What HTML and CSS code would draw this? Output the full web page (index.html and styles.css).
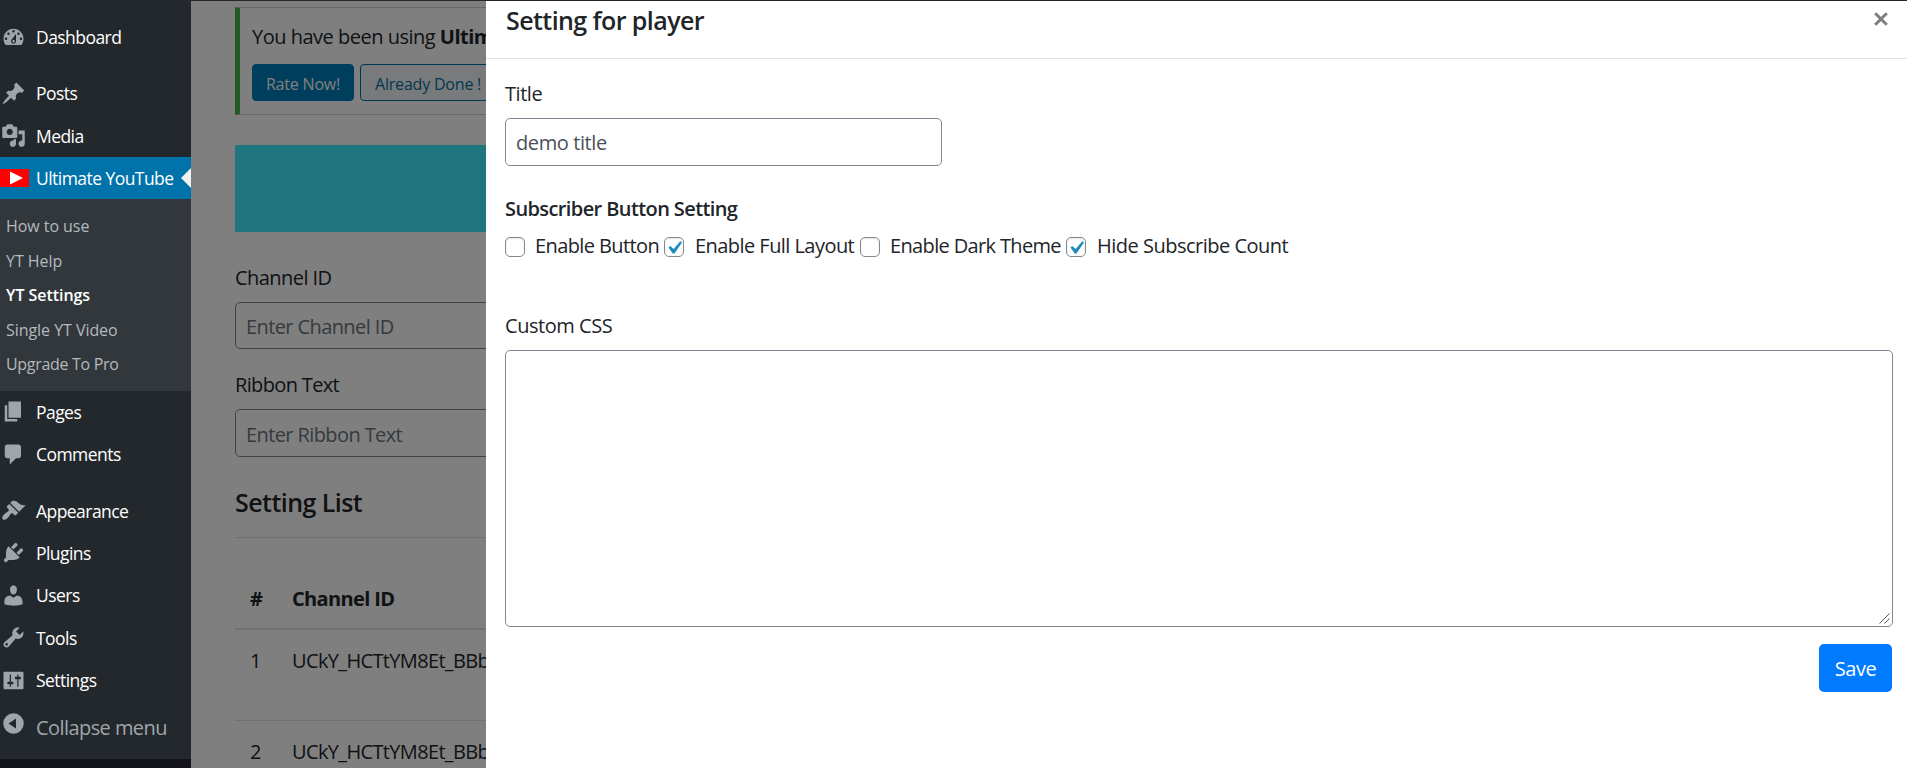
FILE: index.html
```html
<!DOCTYPE html>
<html lang="en">
<head>
<meta charset="utf-8">
<title>Setting for player</title>
<link rel="stylesheet" href="styles.css">
</head>
<body>
<div class="topbar"></div>
<div class="shell">
  <nav class="menu">
    <a class="item"><svg class="icon" viewBox="0 0 20 20"><path d="M3.76 16h12.48c1.1-1.37 1.76-3.11 1.76-5 0-4.42-3.58-8-8-8s-8 3.58-8 8c0 1.89.66 3.63 1.76 5zM10 4c.55 0 1 .45 1 1s-.45 1-1 1-1-.45-1-1 .45-1 1-1zM6 6c.55 0 1 .45 1 1s-.45 1-1 1-1-.45-1-1 .45-1 1-1zm8 0c.55 0 1 .45 1 1s-.45 1-1 1-1-.45-1-1 .45-1 1-1zm-5.37 5.55L12 7v6c0 1.1-.9 2-2 2s-2-.9-2-2c0-.57.24-1.08.63-1.45zM4 10c.55 0 1 .45 1 1s-.45 1-1 1-1-.45-1-1 .45-1 1-1zm12 0c.55 0 1 .45 1 1s-.45 1-1 1-1-.45-1-1 .45-1 1-1zm-5 3c0-.55-.45-1-1-1s-1 .45-1 1 .45 1 1 1 1-.45 1-1z"/></svg><span>Dashboard</span></a>
    <div class="gap"></div>
    <a class="item"><svg class="icon" viewBox="0 0 20 20"><path d="M10.44 3.02l1.82-1.82 6.36 6.35-1.83 1.82c-1.05-.68-2.48-.57-3.41.36l-.75.75c-.92.93-1.04 2.35-.35 3.41l-1.83 1.82-2.41-2.41-2.8 2.79c-.42.42-3.38 2.71-3.8 2.29s1.86-3.39 2.28-3.81l2.79-2.79L4.1 9.36l1.83-1.82c1.05.69 2.48.57 3.4-.36l.75-.75c.93-.92 1.05-2.35.36-3.41z"/></svg><span>Posts</span></a>
    <a class="item"><svg class="icon" viewBox="0 0 20 20"><path d="M13 11V4c0-.55-.45-1-1-1h-1.67L9 1H5L3.67 3H2c-.55 0-1 .45-1 1v7c0 .55.45 1 1 1h10c.55 0 1-.45 1-1zM7 4.5c1.38 0 2.5 1.12 2.5 2.5S8.38 9.5 7 9.5 4.5 8.38 4.5 7 5.62 4.5 7 4.5zM14 6h5v10.5c0 1.38-1.12 2.5-2.5 2.5S14 17.88 14 16.5s1.12-2.5 2.5-2.5c.17 0 .34.02.5.05V9h-3V6zm-4 8.05V13h2v3.5c0 1.38-1.12 2.5-2.5 2.5S7 17.88 7 16.5 8.12 14 9.5 14c.17 0 .34.02.5.05z"/></svg><span>Media</span></a>
    <a class="item current"><svg class="logo" viewBox="0 0 29 18"><rect width="29" height="18" fill="#f00"/><path d="M10 2.5v13L23 9z" fill="#fff"/></svg><span>Ultimate YouTube</span></a>
    <div class="submenu">
      <a><span>How to use</span></a>
      <a><span>YT Help</span></a>
      <a class="active"><span>YT Settings</span></a>
      <a><span>Single YT Video</span></a>
      <a class="tight"><span>Upgrade To Pro</span></a>
    </div>
    <a class="item"><svg class="icon" viewBox="0 0 20 20"><path d="M6 15V2h10v13H6zm-1 1h8v2H3V5h2v11z"/></svg><span>Pages</span></a>
    <a class="item"><svg class="icon" viewBox="0 0 20 20"><path d="M5 2h9c1.1 0 2 .9 2 2v7c0 1.1-.9 2-2 2h-2l-5 5v-5H5c-1.1 0-2-.9-2-2V4c0-1.1.9-2 2-2z"/></svg><span>Comments</span></a>
    <div class="gap"></div>
    <a class="item"><svg class="icon" viewBox="0 0 20 20"><path d="M14.48 11.06L7.41 3.99l1.5-1.5c.5-.56 2.3-.47 3.51.32 1.21.8 1.43 1.28 2.91 2.1 1.18.64 2.45 1.26 4.45.85zm-.71.71L6.7 4.7 4.93 6.47c-.39.39-.39 1.02 0 1.41l1.06 1.06c.39.39.39 1.03 0 1.42-.6.6-1.43 1.11-2.21 1.69-.35.26-.7.53-1.01.84C1.43 14.23.4 16.08 1.4 17.07c.99 1 2.84-.03 4.18-1.36.31-.31.58-.66.85-1.02.57-.78 1.08-1.61 1.69-2.21.39-.39 1.02-.39 1.41 0l1.06 1.06c.39.39 1.02.39 1.41 0z"/></svg><span>Appearance</span></a>
    <a class="item"><svg class="icon" viewBox="0 0 20 20"><path d="M13.11 4.36L9.87 7.6 8 5.73l3.24-3.24c.35-.34 1.05-.2 1.56.32.52.51.66 1.21.31 1.55zm-8 1.77l.91-1.12 9.01 9.01-1.19.84c-.71.71-2.63 1.16-3.82 1.16H6.14L4.9 17.26c-.59.59-1.54.59-2.12 0-.59-.58-.59-1.53 0-2.12l1.24-1.24v-3.88c0-1.13.4-3.19 1.09-3.89zm7.26 3.97l3.24-3.24c.34-.35 1.04-.21 1.55.31.52.51.66 1.21.31 1.55l-3.24 3.25z"/></svg><span>Plugins</span></a>
    <a class="item"><svg class="icon" viewBox="0 0 20 20"><path d="M10 9.25c-2.27 0-2.73-3.44-2.73-3.44C7 4.02 7.82 2 9.97 2c2.16 0 2.98 2.02 2.71 3.81 0 0-.41 3.44-2.68 3.44zm0 2.57L12.72 10c2.39 0 4.52 2.33 4.52 4.53v2.49s-3.65 1.13-7.24 1.13c-3.65 0-7.24-1.13-7.24-1.13v-2.49c0-2.25 1.94-4.48 4.47-4.48z"/></svg><span>Users</span></a>
    <a class="item"><svg class="icon" viewBox="0 0 20 20"><path d="M16.68 9.77c-1.34 1.34-3.3 1.67-4.95.99l-5.41 6.52c-.99.99-2.59.99-3.58 0s-.99-2.59 0-3.57l6.52-5.42c-.68-1.65-.35-3.61.99-4.95 1.28-1.28 3.12-1.62 4.72-1.06l-2.89 2.89 2.82 2.82 2.86-2.87c.53 1.58.18 3.39-1.08 4.65zM3.81 16.21c.4.39 1.04.39 1.43 0 .4-.4.4-1.04 0-1.43-.39-.4-1.03-.4-1.43 0-.39.39-.39 1.03 0 1.43z"/></svg><span>Tools</span></a>
    <a class="item"><svg class="icon" viewBox="0 0 20 20"><path d="M18 16V4c0-.55-.45-1-1-1H3c-.55 0-1 .45-1 1v12c0 .55.45 1 1 1h14c.55 0 1-.45 1-1zM8 11h1c.55 0 1 .45 1 1s-.45 1-1 1H8v1.5c0 .28-.22.5-.5.5s-.5-.22-.5-.5V13H6c-.55 0-1-.45-1-1s.45-1 1-1h1V5.5c0-.28.22-.5.5-.5s.5.22.5.5V11zm5-2h-1c-.55 0-1-.45-1-1s.45-1 1-1h1V5.5c0-.28.22-.5.5-.5s.5.22.5.5V7h1c.55 0 1 .45 1 1s-.45 1-1 1h-1v5.5c0 .28-.22.5-.5.5s-.5-.22-.5-.5V9z"/></svg><span>Settings</span></a>
    <a class="collapse"><svg class="icon" viewBox="0 0 20 20"><path fill-rule="evenodd" d="M10 1.8a8.2 8.2 0 1 0 0 16.4 8.2 8.2 0 0 0 0-16.4zM12 6v8l-6-4z"/></svg><span>Collapse menu</span></a>
  </nav>
  <main class="page">
    <div class="content">
      <section class="notice">
        <p>You have been using <strong>Ultimate</strong></p>
        <div class="actions"><button class="btn solid">Rate Now!</button><button class="btn outline">Already Done !</button></div>
      </section>
      <div class="banner"></div>
      <label class="label">Channel ID</label>
      <div class="input">Enter Channel ID</div>
      <label class="label second">Ribbon Text</label>
      <div class="input tall">Enter Ribbon Text</div>
      <h2 class="heading">Setting List</h2>
      <div class="table">
        <div class="row head"><span>#</span><span>Channel ID</span></div>
        <div class="row"><span>1</span><span>UCkY_HCTtYM8Et_BBb</span></div>
        <div class="row"><span>2</span><span>UCkY_HCTtYM8Et_BBb</span></div>
      </div>
    </div>
    <div class="shade"></div>
  </main>
  <section class="modal">
    <header class="modal-head">
      <h1>Setting for player</h1>
      <svg class="close" viewBox="0 0 14 14"><path d="M1.2 1.2l11.6 11.6M12.8 1.2L1.2 12.8"/></svg>
    </header>
    <div class="modal-body">
      <label class="field-label">Title</label>
      <div class="text-field">demo title</div>
      <h3>Subscriber Button Setting</h3>
      <div class="checks">
        <label class="check c1"><i class="box"></i><span>Enable Button</span></label>
        <label class="check c2"><i class="box"><svg viewBox="0 0 20 20"><path d="M14.83 4.89l1.34.94-5.81 8.38H9.02L5.78 9.67l1.34-1.25 2.57 2.4z"/></svg></i><span>Enable Full Layout</span></label>
        <label class="check c3"><i class="box"></i><span>Enable Dark Theme</span></label>
        <label class="check c4"><i class="box"><svg viewBox="0 0 20 20"><path d="M14.83 4.89l1.34.94-5.81 8.38H9.02L5.78 9.67l1.34-1.25 2.57 2.4z"/></svg></i><span>Hide Subscribe Count</span></label>
      </div>
      <label class="field-label css-label">Custom CSS</label>
      <div class="area-wrap">
        <textarea class="area"></textarea>
        <svg class="grip" viewBox="0 0 11 11"><path d="M.5 10.500l10-10M5.500 10.500l5-5"/></svg>
      </div>
      <button class="save">Save</button>
    </div>
  </section>
</div>
</body>
</html>
```
FILE: styles.css
```css
* { box-sizing: border-box; }
body {
  margin: 0;
  height: 768px;
  overflow: hidden;
  background: #fff;
  color: #212529;
  font: 20px/30px "Open Sans", "Noto Sans", sans-serif;
  letter-spacing: -.55px;
}
.topbar { height: 1px; background: #23282d; }
.shell { display: grid; grid-template-columns: 191px 295px 1421px; height: 767px; }

/* Admin menu */
.menu { background: linear-gradient(#23282d 758px, #131419 758px); padding-top: 15px; }
.item { display: flex; align-items: center; height: 42.4px; padding-left: 1px; color: #fff; font-size: 17.5px; letter-spacing: -.55px; line-height: 24px; }
.icon { width: 25px; height: 25px; margin-right: 10px; fill: #a0a5aa; flex: none; }
.gap { height: 13.8px; }
.item.current { position: relative; background: #0073aa; padding-left: 0; }
.item.current::after { content: ""; position: absolute; right: 0; top: 11px; border: 10px solid transparent; border-right-color: #f1f1f1; border-left: 0; }
.logo { width: 29px; height: 18px; margin-right: 7px; }
.submenu { height: 191.400px; background: #32373c; padding: 10px 0 0 6px; font-size: 16px; letter-spacing: -.05px; color: #b4b9be; }
.submenu a { display: block; height: 34.5px; line-height: 34px; }
.submenu .active { color: #fff; font-weight: 600; }
.submenu .tight { letter-spacing: -.3px; }
.collapse { display: flex; padding: 9.500px 0 0 1px; color: #a0a5aa; letter-spacing: -.57px; }
.collapse span { padding-top: 2px; }

/* Page behind the dialog */
.page { position: relative; overflow: hidden; }
.shade { position: absolute; inset: 0; background: rgba(0, 0, 0, .5); }
.content { padding: 6px 0 0 44px; width: 1600px; }
.notice { height: 108px; border: 1px solid #ccd0d4; border-left: 5px solid #46b450; padding: 14px 0 0 12px; }
.notice p { margin: 0; letter-spacing: -.5px; }
.actions { display: flex; gap: 6px; margin-top: 12px; }
.btn { height: 37px; border: 1px solid #0071a1; border-radius: 4px; padding: 2px 14px 0; font: 16px/24px "Open Sans", sans-serif; letter-spacing: -.2px; white-space: nowrap; }
.solid { width: 102px; padding: 2px 0 0; background: #007cba; border-color: #007cba; color: #fff; }
.outline { background: #f3f5f6; color: #0071a1; }
.banner { height: 87px; margin: 30px 0 31px; background: #3eecfc; }
.label { display: block; height: 39px; }
.input { height: 47px; border: 1px solid #7e8993; border-radius: 5px; padding: 9px 10px; color: #6c757d; letter-spacing: -.6px; }
.input.tall { height: 48px; padding-top: 10px; }
.label.second { margin-top: 21px; letter-spacing: -.65px; }
.heading { margin: 27px 0 0; height: 54px; font-size: 25px; font-weight: 550; line-height: 36px; border-bottom: 1px solid #e0e0e0; }
.table { display: grid; }
.row { display: grid; grid-template-columns: 42px 1fr; height: 91px; padding: 16px 15px 0; border-bottom: 1px solid #dee2e6; letter-spacing: -.65px; }
.row.head { height: 92px; padding-top: 46px; font-weight: 700; border-bottom-width: 2px; }

/* Dialog */
.modal { background: #fff; }
.modal-head { display: flex; justify-content: space-between; height: 58px; border-bottom: 1px solid #dee2e6; padding: 1px 19px 0 20px; }
.modal-head h1 { margin: 0; font-size: 25px; font-weight: 550; line-height: 36px; letter-spacing: -.57px; }
.close { width: 14px; height: 14px; margin: 10px 0 0; stroke: #7f7f7f; stroke-width: 3; fill: none; }
.modal-body { display: flex; flex-direction: column; padding: 20px 14px 0 19px; }
.field-label { height: 39px; letter-spacing: -.45px; }
.text-field { width: 437px; height: 48px; border: 1px solid #7e8993; border-radius: 5px; padding: 9px 10px; color: #495057; letter-spacing: -.4px; }
h3 { margin: 28px 0 0; font-size: 20px; font-weight: 600; line-height: 30px; letter-spacing: -.6px; }
.checks { display: flex; margin-top: 8px; height: 30px; }
.check { display: flex; align-items: center; gap: 10px; white-space: nowrap; }
.check span { padding-bottom: 2px; }
.c1 { width: 159px; letter-spacing: -.6px; }
.c2 { width: 196px; gap: 11px; }
.c3 { width: 206px; letter-spacing: -.65px; }
.c4 { gap: 11px; letter-spacing: -.5px; }
.box { position: relative; flex: none; width: 20px; height: 20px; border: 1px solid #7e8993; border-radius: 5px; box-shadow: inset 0 1px 2px rgba(0, 0, 0, .1); }
.box svg { position: absolute; left: -4px; top: -3px; width: 26px; height: 26px; fill: #1e8cbe; }
.css-label { margin-top: 49px; }
.area-wrap { position: relative; height: 277px; }
.area { display: block; width: 100%; height: 277px; border: 1px solid #7e8993; border-radius: 5px; background: #fff; padding: 8px 11px; font: 16px/24px "Open Sans", sans-serif; resize: none; }
.grip { position: absolute; right: 3px; bottom: 3px; width: 11px; height: 11px; stroke: #555; fill: none; }
.save { align-self: flex-end; width: 73px; height: 48px; margin: 17px 1px 0 0; border: 0; border-radius: 5px; background: #007bff; color: #fff; font: 20px/30px "Open Sans", sans-serif; letter-spacing: -.5px; padding: 2px 0 0; }
```
